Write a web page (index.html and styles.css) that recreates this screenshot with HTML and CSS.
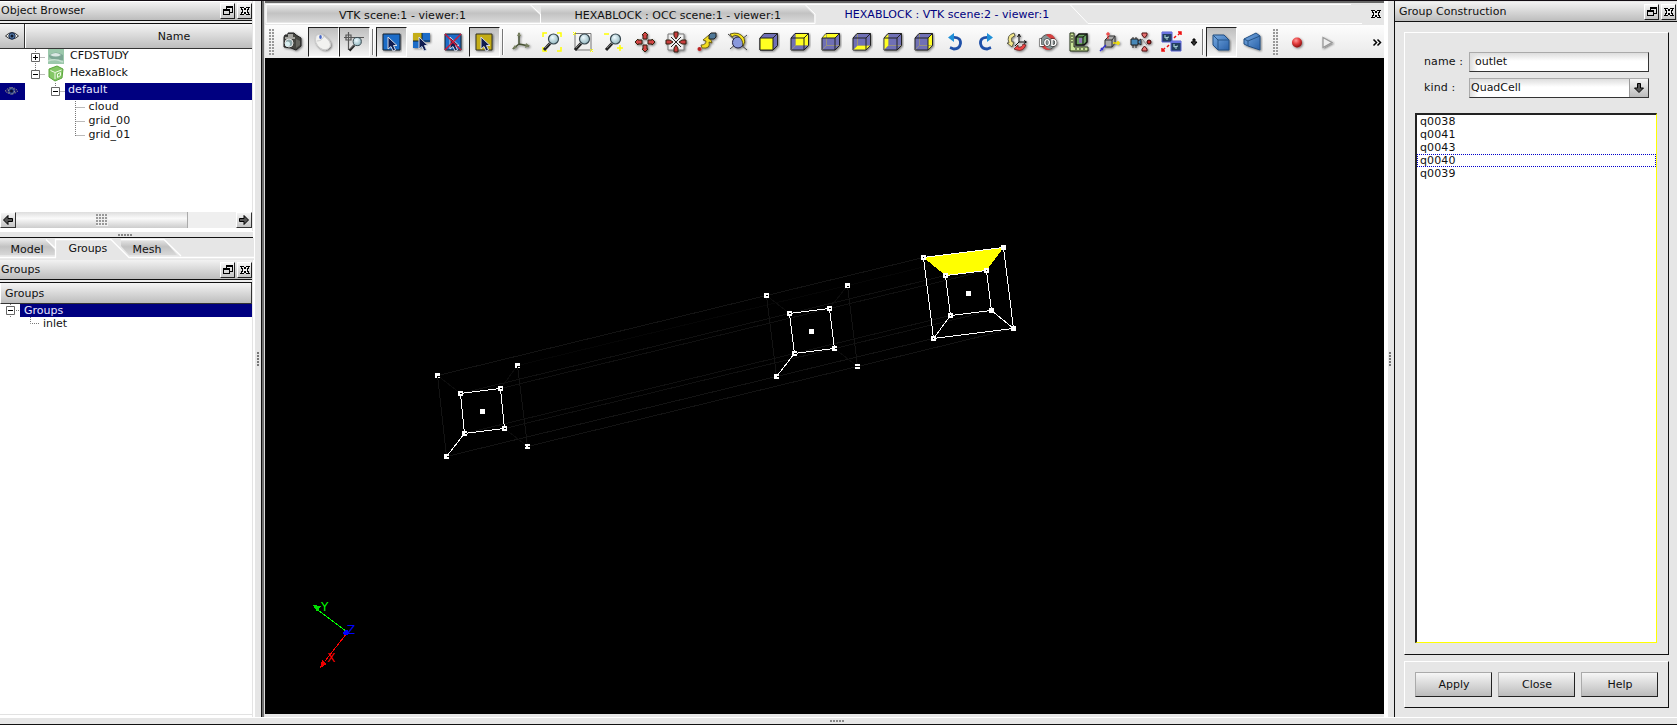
FILE: index.html
```html
<!DOCTYPE html>
<html lang="en">
<head>
<meta charset="utf-8">
<title>Group Construction</title>
<link rel="stylesheet" href="styles.css">
</head>
<body>
<svg class="defs" width="0" height="0">
  <defs>
    <linearGradient id="gTab" x1="0" y1="0" x2="0" y2="1"><stop offset="0" stop-color="#e4e4e4"/><stop offset=".45" stop-color="#c2c2c2"/><stop offset="1" stop-color="#d8d8d8"/></linearGradient>
    <linearGradient id="gBlue" x1="0" y1="0" x2="1" y2="1"><stop offset="0" stop-color="#78abe2"/><stop offset="1" stop-color="#2860a8"/></linearGradient>
    <radialGradient id="gRed" cx=".4" cy=".3" r=".7"><stop offset="0" stop-color="#ff9a9a"/><stop offset=".5" stop-color="#e43c3c"/><stop offset="1" stop-color="#8c1010"/></radialGradient>
    <radialGradient id="gLens" cx=".4" cy=".35" r=".7"><stop offset="0" stop-color="#eefaff"/><stop offset="1" stop-color="#8fb4bd"/></radialGradient>
    <filter id="sh" x="-20%" y="-20%" width="150%" height="150%"><feDropShadow dx="1" dy="1" stdDeviation=".8" flood-color="#000" flood-opacity=".5"/></filter>
  </defs>
  <symbol id="float" viewBox="0 0 14 14"><path d="M5 2H12V4H5ZM11 4H12V9H9V8H11ZM5 4H6V5H5ZM2 5H9V7H2ZM2 7H3V11H2ZM8 7H9V11H8ZM2 10H9V11H2Z" fill="#000" shape-rendering="crispEdges"/></symbol>
  <symbol id="close" viewBox="0 0 14 14"><path d="M2.500 3.500H5.500L7 5.500L8.500 3.500H11.500L9 7L11.500 10.500H8.500L7 8.500L5.500 10.500H2.500L5 7Z" fill="#eee" stroke="#000" shape-rendering="crispEdges"/></symbol>
  <symbol id="arrow" viewBox="0 0 12 12"><path d="M1.500 6L6 1.500V4.500H10.500V7.500H6V10.500Z" fill="#555" stroke="#000"/></symbol>
  <symbol id="eye" viewBox="0 0 14 10"><path d="M.5 5Q7-2 13.500 5Q7 11 .5 5Z" fill="#f4f4ee" stroke="#333"/><circle cx="7" cy="5" r="3.200" fill="#5278a8" stroke="#182848"/><circle cx="7" cy="5" r="1.500" fill="#101828"/></symbol>
  <symbol id="eyeOn" viewBox="0 0 14 10"><path d="M.5 5Q7-2 13.500 5Q7 11 .5 5Z" fill="#1a1a78" stroke="#888" stroke-dasharray="1.500 1"/><circle cx="7" cy="5" r="3" fill="#24408c" stroke="#999" stroke-dasharray="2 1"/><circle cx="7" cy="5" r="1.500" fill="#080830"/></symbol>
  <symbol id="plus" viewBox="0 0 9 9"><path d="M.5.5H8.500V8.500H.5Z" fill="#fff" stroke="#666"/><path d="M2 4.500H7M4.500 2V7" stroke="#000"/></symbol>
  <symbol id="minus" viewBox="0 0 9 9"><path d="M.5.5H8.500V8.500H.5Z" fill="#fff" stroke="#666"/><path d="M2 4.500H7" stroke="#000"/></symbol>
  <symbol id="cursor" viewBox="0 0 22 22"><path d="M8 6V18L11 15.500L13 20L15.500 19L13.500 14.500H17Z" fill="#101c50" stroke="#d5dbe5"/></symbol>
  <symbol id="lens" viewBox="0 0 22 22"><path d="M9 12.500L3 19" stroke="#222" stroke-width="3"/><path d="M9 12L4 17" stroke="#777" stroke-width="1"/><circle cx="12.500" cy="8" r="5" fill="url(#gLens)" stroke="#37474f" stroke-width="1.200"/></symbol>
  <symbol id="cube" viewBox="0 0 22 22"><path d="M2 7L6 2.500H19.500V14.500L15 19H2Z" fill="#6f70b5" stroke="#222" filter="url(#sh)"/></symbol>
  <symbol id="cubeEdges" viewBox="0 0 22 22"><path d="M2 7H15V19M15 7L19.500 2.500" fill="none" stroke="#222"/></symbol>
  <symbol id="cubeHidden" viewBox="0 0 22 22"><path d="M6.500 3V14.500H19M6.500 14.500L2.500 18.500" fill="none" stroke="#a29a70" stroke-width=".8"/></symbol>
</svg>
<div class="app">
  <main class="work">
    <aside class="left">
      <div class="title"><span>Object Browser</span><i class="tbtn"><svg><use href="#float"/></svg></i><i class="tbtn"><svg><use href="#close"/></svg></i></div>
      <div class="rule"></div>
      <section class="browser">
        <div class="head"><span class="eyecell"><svg width="14" height="10"><use href="#eye"/></svg></span><span class="namecell">Name</span></div>
        <div class="tree">
          <svg class="treeart" width="252" height="163" viewBox="0 49 252 163">
            <path d="M35.500 49V74M35.500 57.500H45M35.500 74.500H45M55.500 83V91M55.500 91.500H65M75.500 101V136M75.500 107.500H85M75.500 121.500H85M75.500 135.500H85" fill="none" stroke="#777" stroke-dasharray="1 1"/>
            <rect x="0" y="83" width="25" height="17" fill="#000080"/>
            <use href="#eyeOn" x="4" y="86" width="15" height="10"/>
            <use href="#plus" x="31" y="53" width="9" height="9"/>
            <use href="#minus" x="31" y="70" width="9" height="9"/>
            <use href="#minus" x="51" y="87" width="9" height="9"/>
            <rect x="48" y="49" width="16" height="15" fill="#9cc8ac"/>
            <path d="M49 55Q56 50 63 55V60Q56 63 49 57Z" fill="#7ca694"/><path d="M50 55Q56 51 61 55Q56 58 50 55Z" fill="#dbe8e4"/><path d="M48 61Q55 58 63 62" fill="none" stroke="#c4dece" stroke-width="1.500"/>
            <path d="M49 69L57 66L63 69L62 78L55 81L49 77Z" fill="#84c766" stroke="#5aa43c"/><path d="M50.500 70.500L55 72.500L61.500 70M55 73V79M57.500 74V77.500L60.500 75.500V72.500Z" fill="none" stroke="#f0fbe8"/>
          </svg>
          <span class="t t1">CFDSTUDY</span><span class="t t2">HexaBlock</span><span class="t sel">default</span>
          <span class="t leaf">cloud</span><span class="t leaf">grid_00</span><span class="t leaf">grid_01</span>
        </div>
        <div class="scroll"><i class="sbtn"><svg width="12" height="12"><use href="#arrow"/></svg></i><i class="thumb"><b class="grip"></b></i><i class="track"></i><i class="sbtn flip"><svg width="12" height="12"><use href="#arrow"/></svg></i></div>
      </section>
      <div class="hsplit"><b class="dots"></b></div>
      <div class="ltabs">
        <svg class="tabart" width="254" height="22"><path d="M0 2H46L55 12V17H0Z" fill="url(#gTab)"/><path d="M121 2H164L177 17H129L121 8Z" fill="url(#gTab)"/><path d="M0 19.500H55.500V1.500H111L129 19.500H254M46 1.500L55 10M121 1.500H164L181 18" fill="none" stroke="#fff" stroke-width="1.300"/></svg>
        <span class="lt1">Model</span><span class="lt2">Groups</span><span class="lt3">Mesh</span>
      </div>
      <div class="title second"><span>Groups</span><i class="tbtn"><svg><use href="#float"/></svg></i><i class="tbtn"><svg><use href="#close"/></svg></i></div>
      <div class="rule"></div>
      <section class="groups">
        <div class="head ghead">Groups</div>
        <div class="grow"><svg width="20" height="13" viewBox="0 0 20 13"><path d="M10.500 0V13M10 6.500H20" stroke="#777" stroke-dasharray="1 1"/><use href="#minus" x="6" y="2" width="9" height="9"/></svg><span class="gsel">Groups</span></div>
        <div class="grow"><svg width="43" height="13" viewBox="0 0 43 13"><path d="M30.500 0V6.500H40" fill="none" stroke="#777" stroke-dasharray="1 1"/></svg><span>inlet</span></div>
      </section>
    </aside>
    <div class="vsplit"><b class="dots vert"></b></div>
    <section class="viewer">
      <div class="vtabs">
        <svg class="tabart" width="1119" height="22"><path d="M2 3H265L275 12V19H2Z" fill="url(#gTab)"/><path d="M276 3H540L549 12V19H276Z" fill="url(#gTab)"/><path d="M1 20.500V1.500H1086M265 1.500L275.500 11V20.500M540 1.500L550 11V20.500H1M805 1.500L823 20.500H1097" fill="none" stroke="#fff"/></svg>
        <span class="vt1">VTK scene:1 - viewer:1</span><span class="vt2">HEXABLOCK : OCC scene:1 - viewer:1</span><span class="vt3">HEXABLOCK : VTK scene:2 - viewer:1</span><svg class="vclose" width="14" height="14"><use href="#close"/></svg>
      </div>
      <div class="toolbar">
        <i class="handle first"></i>
        <i class="tool"><svg viewBox="0 0 22 22" filter="url(#sh)"><path d="M3 6L4 4H7V2H13L15 4L20 7V15L15 19L10 17L3 16Z" fill="#454540" stroke="#222"/><path d="M7 3H12V6H7ZM4 6H14V8H4Z" fill="#a5a5a0"/><path d="M15 8L19 10V14L15 17Z" fill="#65655f"/><circle cx="8" cy="12" r="4" fill="#8ea6a8" stroke="#e5e5e5"/><circle cx="6.500" cy="13" r="2.500" fill="#d9eef0"/></svg></i>
        <i class="tool on"><svg viewBox="0 0 22 22" filter="url(#sh)"><path d="M4 5Q8 1 13 6Q20 11 18 16Q14 21 8 17Q2 12 4 5Z" fill="#f2f2f0" stroke="#ccc"/><path d="M5 10Q10 10 12 5" fill="none" stroke="#ccc"/><ellipse cx="8.500" cy="6" rx="1.300" ry="2" fill="#4668c8"/></svg></i>
        <i class="tool on"><svg viewBox="0 0 22 22"><path d="M5.500 1V19M1 6.500H21M3 4H8V9H3Z" fill="none" stroke="#555" stroke-width="1.200"/><use href="#lens" x="4" y="4" width="18" height="18"/></svg></i>
        <i class="sep"></i>
        <i class="tool on"><svg viewBox="0 0 22 22"><path d="M3 3H20V19H3Z" fill="#1c6cc8" stroke="#123" filter="url(#sh)"/><use href="#cursor" width="22" height="22"/></svg></i>
        <i class="tool"><svg viewBox="0 0 22 22"><path d="M2 2H19V11H11V17H2Z" fill="#1c6cc8" filter="url(#sh)"/><path d="M2 2H11V10H2Z" fill="#c4ad18"/><path d="M11 2V10H2M11 10H19" fill="none" stroke="#123"/><use href="#cursor" width="22" height="22"/></svg></i>
        <i class="tool"><svg viewBox="0 0 22 22"><path d="M3 3H19V19H3Z" fill="#1c6cc8" stroke="#123" filter="url(#sh)"/><use href="#cursor" width="22" height="22"/><path d="M3 3L19 19M19 3L3 19" stroke="#d01838" stroke-width="1.400"/></svg></i>
        <i class="tool on"><svg viewBox="0 0 22 22"><path d="M3 3H19V19H3Z" fill="#c4ad18" stroke="#332" filter="url(#sh)"/><use href="#cursor" width="22" height="22"/></svg></i>
        <i class="sep"></i>
        <i class="tool"><svg viewBox="0 0 22 22" filter="url(#sh)"><path d="M9 2V13L3 18M9 13L19 15" fill="none" stroke="#444f32" stroke-width="1.500"/><path d="M7 5L9 1L11 5ZM5 14L2 18L7 17ZM16 12L20 15L15 17Z" fill="#788060"/></svg></i>
        <i class="tool"><svg viewBox="0 0 22 22"><path d="M2 6V2H6M16 2H20V6M20 16V20H16M6 20H2V16" fill="none" stroke="#ff0" stroke-width="1.500"/><use href="#lens" width="22" height="22"/></svg></i>
        <i class="tool"><svg viewBox="0 0 22 22"><path d="M3 2.500H19V19H3Z" fill="none" stroke="#777"/><use href="#lens" width="22" height="22"/><path d="M1 1L4 4M4 1L1 4M18 18L21 21M21 18L18 21" stroke="#ff0"/></svg></i>
        <i class="tool"><svg viewBox="0 0 22 22"><use href="#lens" width="22" height="22"/><path d="M1 3H6M14 17H20M17 14V20" stroke="#ff0" stroke-width="1.500"/></svg></i>
        <i class="tool"><svg viewBox="0 0 22 22" filter="url(#sh)"><path d="M11 1L14 4H13V8H9V4H8ZM11 21L14 18H13V14H9V18H8ZM1 11L4 8V9H8V13H4V14ZM21 11L18 8V9H14V13H18V14Z" fill="#d24444" stroke="#321"/></svg></i>
        <i class="tool"><svg viewBox="0 0 22 22" filter="url(#sh)"><path d="M3 3H19V19H3Z" fill="#eee" stroke="#777"/><path d="M6 6L16 16M16 6L6 16" stroke="#222"/><path d="M11 8L9 5V1H13V5ZM11 14L9 17V21H13V17ZM8 11L5 9H1V13H5ZM14 11L17 9H21V13H17Z" fill="#c83c3c" stroke="#321"/></svg></i>
        <i class="tool"><svg viewBox="0 0 22 22" filter="url(#sh)"><path d="M6 17Q15 18 13 11L16 12L13 4L7 9L10 10Q10 14 5 14Z" fill="#f2dc20" stroke="#5b4c10" stroke-width=".8"/><path d="M13 4L15 2H20V6L18 8H13Z" fill="#507898" stroke="#222"/><circle cx="3.500" cy="18" r="2" fill="#b22"/></svg></i>
        <i class="tool"><svg viewBox="0 0 22 22" filter="url(#sh)"><path d="M1 3L20 19M3 18L20 4" stroke="#444"/><circle cx="11" cy="11.500" r="5.500" fill="#8998dc" stroke="#224"/><path d="M3 3Q12 0 17 7Q19 11 16 15Q16 8 11 5Q7 3 5 6Z" fill="#f8e51c" stroke="#443d10" stroke-width=".8"/></svg></i>
        <i class="tool"><svg viewBox="0 0 22 22"><use href="#cube"/><path d="M2 7H15V19H2Z" fill="#ff2"/><path d="M2 7V19H15" fill="none" stroke="#222"/><use href="#cubeEdges"/></svg></i>
        <i class="tool"><svg viewBox="0 0 22 22"><use href="#cube"/><path d="M6.500 3H19V14.500H6.500Z" fill="#ff2"/><use href="#cubeHidden"/><use href="#cubeEdges"/></svg></i>
        <i class="tool"><svg viewBox="0 0 22 22"><use href="#cube"/><path d="M2 7L6 3H19L15 7Z" fill="#ff2"/><use href="#cubeHidden"/><use href="#cubeEdges"/></svg></i>
        <i class="tool"><svg viewBox="0 0 22 22"><use href="#cube"/><path d="M2.500 18.500L6.500 14.500H19L15 18.500Z" fill="#ff2"/><use href="#cubeHidden"/><use href="#cubeEdges"/></svg></i>
        <i class="tool"><svg viewBox="0 0 22 22"><use href="#cube"/><path d="M2.500 7L6.500 3V14.500L2.500 18.500Z" fill="#ff2"/><use href="#cubeHidden"/><use href="#cubeEdges"/></svg></i>
        <i class="tool"><svg viewBox="0 0 22 22"><use href="#cube"/><path d="M15 7L19 3V14.500L15 18.500Z" fill="#ff2"/><use href="#cubeHidden"/><use href="#cubeEdges"/></svg></i>
        <i class="tool"><svg viewBox="0 0 22 22"><path d="M9 6.500Q17 6 16.500 12.500Q15.500 18 10 18L6 16.500" fill="none" stroke="#1f50a8" stroke-width="2.800"/><path d="M4 6.500L10 2V11Z" fill="#2090d8"/></svg></i>
        <i class="tool flip"><svg viewBox="0 0 22 22"><path d="M9 6.500Q17 6 16.500 12.500Q15.500 18 10 18L6 16.500" fill="none" stroke="#1f50a8" stroke-width="2.800"/><path d="M4 6.500L10 2V11Z" fill="#2090d8"/></svg></i>
        <i class="tool"><svg viewBox="0 0 22 22" filter="url(#sh)"><path d="M8 2Q0 4 3 12L1 12L6 16L8 11H6Q4 6 9 5Z" fill="#f2e68a" stroke="#443" stroke-width=".8"/><path d="M8 18L12 14V16Q16 17 17 13L20 14Q17 21 11 19Z" fill="#e44" stroke="#622" stroke-width=".8"/><path d="M13 4V11H20M13 11L9 15M11.500 6L13 3L14.500 6M18 9.500L20.500 11L18 12.500" fill="none" stroke="#111"/></svg></i>
        <i class="tool"><svg viewBox="0 0 22 22" filter="url(#sh)"><circle cx="11" cy="11" r="7.500" fill="#8a9697" stroke="#555"/><path d="M9 4Q14 1 17 6L19 9L14 8ZM4 14H8Q9 18 14 18Q8 21 4 14Z" fill="#d84040"/><text x="11" y="14.500" text-anchor="middle" textLength="18" lengthAdjust="spacingAndGlyphs" class="lod">LOD</text></svg></i>
        <i class="tool"><svg viewBox="0 0 22 22" filter="url(#sh)"><path d="M2 2H6V16H20V20H2Z" fill="#cbe49a" stroke="#243014"/><path d="M3 5H5M3 8H5M3 11H5M8 17V19M12 17V19M16 17V19" stroke="#222"/><path d="M8 6L11 3H19V11L16 14H8Z" fill="#68a060" stroke="#111" stroke-width="1.500"/><path d="M8 6H15V14M15 6L19 3" fill="none" stroke="#111"/><path d="M11 7H14V12H11Z" fill="#9078b8"/></svg></i>
        <i class="tool"><svg viewBox="0 0 22 22" filter="url(#sh)"><path d="M6 9L10 5H16V12L13 16H6Z" fill="#aaa" stroke="#333"/><path d="M6 9H13V16M13 9L16 5" fill="none" stroke="#333"/><path d="M9 8V1M7 3H11" stroke="#e22"/><path d="M14 12H21M19 10V14" stroke="#ed0" stroke-width="1.500"/><path d="M7 14L1 20M2 17L4 19" stroke="#33c" stroke-width="1.500"/></svg></i>
        <i class="tool"><svg viewBox="0 0 22 22" filter="url(#sh)"><path d="M1 8H8V14H1ZM8 10L11 8V14L8 12M3 6V8M6 6V8M3 14V17M6 14V17" fill="#4788b8" stroke="#222"/><path d="M12 2H17V4L14.500 7L12 4ZM12 20H17V18L14.500 15L12 18Z" fill="#e57070" stroke="#511"/><circle cx="19" cy="11" r="2" fill="#c22" stroke="#300"/><path d="M12 8L17 14" stroke="#888"/></svg></i>
        <i class="tool"><svg viewBox="0 0 22 22"><path d="M1 1H11V11H1ZM10 10H20V20H10Z" fill="#223f60" stroke="#5860d0"/><path d="M1 2H11M10 11H20" stroke="#6872e0" stroke-width="2"/><path d="M4 4V7L8 6M6 7V9M13 13V16L17 15M15 16V18" fill="none" stroke="#b8e2e2"/><path d="M13 7L15 5M17 4L20 1M17 1H20V4M8 14L6 16M4 17L1 20M1 17V20H4" fill="none" stroke="#e11" stroke-width="1.500"/></svg></i>
        <i class="drop"><svg width="8" height="9" viewBox="0 0 8 9"><path d="M3 1H5V4H7L4 7.500L1 4H3Z" fill="#333" stroke="#000"/></svg></i>
        <i class="sep"></i>
        <i class="tool on"><svg viewBox="0 0 22 22"><path d="M3 4H14L19 9V19H8L3 14Z" fill="url(#gBlue)" stroke="#234e82" filter="url(#sh)"/><path d="M3 4L8 9H19M8 9V19" fill="none" stroke="#265488"/></svg></i>
        <i class="tool"><svg viewBox="0 0 22 22"><path d="M3 8L15 2L19 5V19L7 15L3 13Z" fill="url(#gBlue)" stroke="#234e82" filter="url(#sh)"/><path d="M3 8L7 10L19 5M7 10V15" fill="none" stroke="#265488"/></svg></i>
        <i class="handle"></i>
        <i class="tool"><svg viewBox="0 0 22 22"><circle cx="11" cy="11.500" r="5" fill="url(#gRed)" filter="url(#sh)"/></svg></i>
        <i class="tool"><svg viewBox="0 0 22 22"><path d="M6 6.500L15 11.500L6 16.500Z" fill="#eee" stroke="#999" stroke-width="1.300" filter="url(#sh)"/></svg></i>
        <svg class="more" width="10" height="9" viewBox="0 0 10 9"><path d="M1.500 1.500L4.500 4.500L1.500 7.500M5.500 1.500L8.500 4.500L5.500 7.500" fill="none" stroke="#000" stroke-width="1.500"/></svg>
      </div>
      <svg class="scene" width="1119" height="656" viewBox="265 58 1119 656" shape-rendering="crispEdges">
        <rect x="265" y="58" width="1119" height="656" fill="#000"/>
        <g fill="none" stroke="#131313">
          <path d="M437.500 375.500L766.500 295.500L923.500 257.500M446.500 456.500L776.500 376.500L933.500 338.500M527.500 446.500L857.500 366.500L1013.500 328.500"/>
          <path d="M517.500 365.500L847.500 285.500L1003.500 247.500" stroke="#060606"/>
          <path d="M460.500 393.500L789.500 313.500L945.500 275.500M500.500 388.500L829.500 308.500L986.500 270.500M464.500 433.500L794.500 353.500L950.500 315.500M504.500 428.500L834.500 348.500L991.500 310.500" stroke="#101010"/>
          <path d="M437.500 375.500L446.500 456.500M517.500 365.500L527.500 446.500M766.500 295.500L776.500 376.500M847.500 285.500L857.500 366.500"/>
          <path d="M460.500 393.500L437.500 375.500M500.500 388.500L517.500 365.500M527.500 446.500L504.500 428.500M789.500 313.500L766.500 295.500M829.500 308.500L847.500 285.500M857.500 366.500L834.500 348.500" stroke="#0c0c0c"/>
        </g>
        <path d="M923.500 257.500L1003.500 247.500L986.500 270.500L945.500 275.500Z" fill="#ff0"/>
        <g fill="none" stroke="#fff">
          <path d="M446.500 456.500L464.500 433.500L460.500 393.500L500.500 388.500L504.500 428.500L464.500 433.500M776.500 376.500L794.500 353.500L789.500 313.500L829.500 308.500L834.500 348.500L794.500 353.500"/>
          <path d="M923.500 257.500L1003.500 247.500L1013.500 328.500L933.500 338.500ZM945.500 275.500L986.500 270.500L991.500 310.500L950.500 315.500ZM933.500 338.500L950.500 315.500M1013.500 328.500L991.500 310.500"/>
        </g>
        <path d="M435 373h5v5h-5zM515 363h5v5h-5zM444 454h5v5h-5zM525 444h5v5h-5zM458 391h5v5h-5zM498 386h5v5h-5zM462 431h5v5h-5zM502 426h5v5h-5zM480 409h5v5h-5zM764 293h5v5h-5zM845 283h5v5h-5zM774 374h5v5h-5zM855 364h5v5h-5zM787 311h5v5h-5zM827 306h5v5h-5zM792 351h5v5h-5zM832 346h5v5h-5zM809 329h5v5h-5zM921 255h5v5h-5zM1001 245h5v5h-5zM931 336h5v5h-5zM1011 326h5v5h-5zM943 273h5v5h-5zM984 268h5v5h-5zM948 313h5v5h-5zM989 308h5v5h-5zM966 291h5v5h-5z" fill="#fff"/>
        <path d="M437 376.500h3M437 377.500h1M517 366.500h3M517 367.500h1M447 456.500h2M525 446.500h1M528 446.500h2M460 393.500h2M500 388.500h2M465 433.500h2M504 428.500h2M766 295.500h2M847 286.500h2M777 376.500h2M855 366.500h5M789 313.500h2M829 308.500h2M794 353.500h3M835 348.500h2M923 257.500h1M933 338.500h1M945 275.500h1M986 270.500h1M950 315.500h1" stroke="#000"/>
        <path d="M347 632L318 610" stroke="#0f0"/><path d="M313 605L321 606L317 612Z" fill="#0d0"/>
        <path d="M347 633L325 661" stroke="#f00"/><path d="M320 668L322 660L327 664Z" fill="#e00"/>
        <path d="M342 633L345 630H348V635H344Z" fill="#00f"/>
        <g class="axis"><text x="321" y="611" fill="#0f0">Y</text><text x="327" y="662" fill="#f00">X</text><text x="347" y="634" fill="#00f">Z</text></g>
      </svg>
    </section>
    <div class="vsplit rightsplit"><b class="dots vert"></b></div>
    <aside class="right">
      <div class="title"><span>Group Construction</span><i class="tbtn"><svg><use href="#float"/></svg></i><i class="tbtn"><svg><use href="#close"/></svg></i></div>
      <div class="frame form">
        <div class="field"><label>name :</label><span class="input">outlet</span></div>
        <div class="field"><label>kind :</label><span class="input combo">QuadCell<i><svg width="12" height="12"><use href="#arrow"/></svg></i></span></div>
        <div class="list"><div>q0038</div><div>q0041</div><div>q0043</div><div class="current">q0040</div><div>q0039</div></div>
      </div>
      <div class="frame actions"><button>Apply</button><button>Close</button><button>Help</button></div>
    </aside>
  </main>
  <footer class="bottom"><b class="dots"></b></footer>
</div>
</body>
</html>
```
FILE: styles.css
```css
* { box-sizing: border-box; }
body { margin: 0; background: #e6e6e6; font: 11px/13px "DejaVu Sans", sans-serif; color: #111; overflow: hidden; }
i { font-style: normal; }
svg { display: block; flex: none; }
.defs { position: absolute; }
.app { width: 1677px; height: 725px; display: flex; flex-direction: column; border-top: 1px solid #120c12; }
.work { height: 716px; display: flex; }
.left { width: 253px; display: flex; flex-direction: column; background: #fff; padding-top: 1px; border-right: 1px solid #e4e4e4; }
.title { height: 19px; display: flex; align-items: center; padding: 0 0 0 1px; background: linear-gradient(#f2f2f2, #bdbdbd); border-bottom: 1px solid #111; flex: none; }
.title span { flex: 1; padding-bottom: 1px; }
.tbtn { width: 15px; height: 16px; margin-left: 2px; border: 1px solid #fff; border-right-color: #222; border-bottom-color: #222; background: linear-gradient(#f6f6f6, #c5c5c5); }
.tbtn svg { width: 14px; height: 14px; }
.rule { height: 3px; border-bottom: 1px solid #111; background: #eee; flex: none; }
.browser { height: 207px; flex: none; }
.head { height: 25px; display: flex; background: linear-gradient(#f4f4f4, #bdbdbd); border-bottom: 1px solid #333; }
.eyecell { width: 25px; display: flex; align-items: center; padding-left: 5px; border-right: 1px solid #333; }
.namecell { flex: 1; display: flex; align-items: center; justify-content: center; padding-left: 70px; border-left: 1px solid #fff; }
.tree { height: 163px; position: relative; display: flex; flex-direction: column; }
.treeart { position: absolute; left: 0; top: 0; }
.t { position: relative; height: 14px; line-height: 14px; margin-left: 88px; flex: none; }
.t1 { margin-left: 70px; height: 17px; line-height: 13px; }
.t2 { margin-left: 70px; height: 17px; }
.t.sel { margin-left: 65px; padding-left: 3px; height: 17px; line-height: 13px; background: #000080; color: #e8e8ff; letter-spacing: .1px; }
.t.leaf { margin-left: 88.5px; letter-spacing: .1px; }
.scroll { height: 16px; display: flex; width: 252px; }
.sbtn { width: 16px; display: flex; align-items: center; justify-content: center; border: 1px solid #fff; border-right-color: #333; border-bottom-color: #333; background: linear-gradient(#f6f6f6, #c5c5c5); }
.thumb { width: 172px; display: flex; align-items: center; justify-content: center; background: linear-gradient(#ddd, #fafafa 40%, #ccc); border-right: 1px solid #aaa; }
.grip { width: 12px; height: 12px; background: repeating-linear-gradient(90deg, transparent 0 2px, #f0f0f0 2px 3px), repeating-linear-gradient(#999 0 2px, #f0f0f0 2px 3px); }
.track { flex: 1; background: #efefef; }
.flip { transform: scaleX(-1); }
.sbtn.flip { border-color: #fff #fff #333 #333; }
.hsplit { height: 7px; border-top: 1px solid #fff; border-bottom: 1px solid #111; background: #e6e6e6; display: flex; justify-content: center; align-items: center; padding-right: 4px; flex: none; margin-right: -2px; }
.dots { width: 14px; height: 2px; background: repeating-linear-gradient(90deg, #888 0 2px, transparent 2px 3px); }
.dots.vert { width: 2px; height: 14px; background: repeating-linear-gradient(#777 0 2px, transparent 2px 3px); }
.ltabs { height: 22px; position: relative; background: #e6e6e6; display: flex; align-items: center; padding-bottom: 2px; flex: none; margin-right: -2px; }
.tabart { position: absolute; left: 0; top: 0; }
.ltabs span, .vtabs span { position: relative; white-space: nowrap; }
.lt1 { margin-left: 10.5px; width: 58px; padding-top: 2px; }
.lt2 { width: 64px; letter-spacing: -.1px; }
.lt3 { padding-top: 2px; }
.second { height: 20px; }
.groups { flex: 1; border-bottom: 1px solid #e2e2e2; margin-bottom: 2px; }
.ghead { height: 21px; align-items: center; padding-left: 4px; border-right: 1px solid #333; border-left: 1px solid #fff; }
.grow { height: 13px; display: flex; }
.gsel { flex: 1; padding-left: 4px; background: #000080; color: #e8e8ff; }
.vsplit { width: 12px; display: flex; align-items: center; padding-left: 4px; background: linear-gradient(90deg, #fff 2px, #e6e6e6 2px 8px, #111 8px 9px, #707070 9px 11px, #ddd 11px); }
.viewer { width: 1119px; display: flex; flex-direction: column; background: #e6e6e6; }
.vtabs { height: 24px; border-top: 2px solid #666; position: relative; display: flex; align-items: center; flex: none; }
.vt1 { margin-left: 74px; width: 235.5px; padding-top: 3px; letter-spacing: .04px; }
.vt2 { width: 270px; padding-top: 3px; }
.vt3 { color: #000080; width: 524px; padding-top: 1px; letter-spacing: .03px; }
.vclose { position: relative; }
.toolbar { height: 33px; display: flex; align-items: center; background: linear-gradient(#fdfdfd, #e8e8e8); padding-top: 1px; flex: none; }
.tool { width: 31px; height: 30px; display: flex; align-items: center; justify-content: center; flex: none; }
.tool svg { width: 22px; height: 22px; }
.on { border: 1px solid #222; border-right-color: #fff; border-bottom-color: #fff; background: linear-gradient(#bfbfbf, #f4f4f4); }
.sep { width: 6px; height: 26px; background: linear-gradient(90deg, transparent 2px, #777 2px 3px, #fff 3px 4px, transparent 4px); }
.handle { width: 14px; height: 26px; flex: none; background: repeating-linear-gradient(transparent 0 2px, #f4f4f4 2px 3px) 5px 0/5px 26px no-repeat, linear-gradient(90deg, #999 2px, transparent 2px 3px, #999 3px) 5px 0/5px 26px no-repeat; }
.first { width: 11.5px; background-position: 4px 0; }
.drop { width: 12px; display: flex; justify-content: center; }
.more { margin-left: 28px; }
.lod { font: bold 8.500px "DejaVu Sans", sans-serif; fill: #fff; stroke: #222; stroke-width: 1px; paint-order: stroke; }
.axis { font: 12px "DejaVu Sans", sans-serif; }
.rightsplit { width: 11px; padding-left: 5px; background: linear-gradient(90deg, #fff 4px, #e6e6e6 4px 10px, #111 10px); }
.right { width: 282px; padding-top: 1px; display: flex; flex-direction: column; }
.right .title { height: 20px; padding: 0 1px 0 4px; letter-spacing: .02px; }
.frame { margin-left: 9px; width: 265px; border: 1px solid #fff; border-right-color: #111; border-bottom-color: #111; flex: none; }
.form { margin-top: 10px; height: 623px; padding: 19px 11px 0 10px; }
.field { height: 20px; margin-bottom: 6px; display: flex; align-items: center; padding-left: 9px; }
.field label { width: 45px; padding-bottom: 1px; letter-spacing: .1px; }
.input { width: 180px; height: 20px; display: flex; align-items: center; padding: 0 0 1px 5px; border: 1px solid #aaa; border-right-color: #333; border-bottom-color: #333; background: linear-gradient(90deg, #ddd, transparent 8px), linear-gradient(#ddd, #fff 8px); }
.combo { padding: 0 0 1px 1px; justify-content: space-between; }
.combo i { width: 19px; height: 18px; margin-bottom: -1px; display: flex; align-items: center; justify-content: center; border-left: 1px solid #999; background: linear-gradient(#f6f6f6, #bbb); }
.combo svg { transform: rotate(-90deg); }
.list { margin-top: 15px; height: 530px; background: #fff; border: 1px solid #ff0; border-left: 2px solid #222; border-top: 2px solid #222; }
.list div { height: 13px; padding-left: 3px; line-height: 13px; letter-spacing: .1px; }
.list .current { outline: 1px dotted #00c; outline-offset: -1px; }
.actions { margin-top: 6px; height: 47px; padding: 10px; display: flex; gap: 6px; }
.actions button { width: 77px; height: 25px; padding: 0 0 0 1px; font: inherit; color: #111; border: 1px solid #aaa; border-right-color: #222; border-bottom-color: #222; background: linear-gradient(#f6f6f6, #bbb); }
.bottom { height: 8px; border-top: 1px solid #fff; border-bottom: 1px solid #111; display: flex; align-items: center; justify-content: center; padding-right: 4px; }
```
